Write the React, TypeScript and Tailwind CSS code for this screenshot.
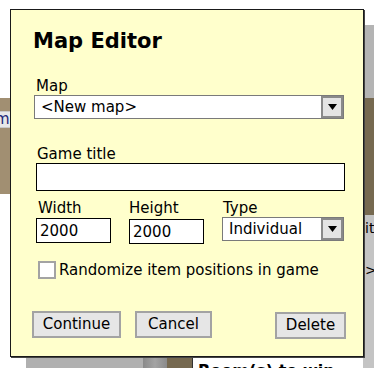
import { ChangeEvent } from 'react';

const font = { fontFamily: '"DejaVu Sans", Verdana, sans-serif' };

function Arrow() {
  return (
    <svg width="9" height="6" viewBox="0 0 9 6">
      <path d="M0 0h9L4.5 6z" fill="#000" />
    </svg>
  );
}

function FakeSelect({ value, className }: { value: string; className: string }) {
  return (
    <div className={`flex items-stretch bg-white border border-[#7a7a7a] ${className}`}>
      <div className="flex-1 flex items-center pl-[6px] text-[15px] leading-none text-black">{value}</div>
      <div className="w-[22px] flex items-center justify-center bg-[#e4e4e4] border-2 border-[#8a8a8a]">
        <Arrow />
      </div>
    </div>
  );
}

function Field({ value, className }: { value: string; className: string }) {
  return (
    <input
      readOnly
      value={value}
      onChange={(_e: ChangeEvent<HTMLInputElement>) => {}}
      className={`bg-white border border-black px-[3px] text-[15px] text-black outline-none ${className}`}
      style={font}
    />
  );
}

function Btn({ label, className }: { label: string; className: string }) {
  return (
    <button className={`h-[27px] bg-[#e6e6e6] border-2 border-[#a3a3a3] text-[15px] text-black leading-none ${className}`} style={font}>
      {label}
    </button>
  );
}

export default function App() {
  return (
    <div className="relative w-[374px] h-[368px] bg-white overflow-hidden" style={font}>
      {/* page behind the dialog */}
      <div className="absolute left-[363px] top-[25px] w-[11px] h-[73px] bg-[#b4b4b4]" />
      <div className="absolute left-0 top-[98px] w-[20px] h-[96px] bg-[#a18f72]" />
      <div className="absolute left-0 top-[111px] w-[20px] h-[17px] bg-[#e8e8e8] border-y border-[#c8c8c8] text-[15px] leading-[15px] text-[#1e2a78] -indent-[5px]">m</div>
      <div className="absolute left-[340px] top-[98px] w-[34px] h-[117px] bg-[#766950]" />
      <div className="absolute left-[340px] top-[215px] w-[34px] h-[153px] bg-[#c4c4c4] text-[14px] text-black">
        <div className="pl-[25px] pt-[5px] leading-[16px]">iti</div>
        <div className="pl-[25px] pt-[26px] leading-[16px]">&gt;</div>
      </div>
      <div className="absolute left-0 top-[340px] w-[374px] h-[28px] flex">
        <div className="w-[26px] bg-white" />
        <div className="w-[117px] bg-[#b0b0b0]" />
        <div className="w-[24px] bg-gradient-to-r from-[#8a8a8a] via-[#a4a4a4] to-[#8a8a8a]" />
        <div className="w-[25px] bg-[#766950]" />
        <div className="w-[1px] bg-[#333]" />
        <div className="flex-1 bg-white pt-[23px] pl-[5px] text-[16px] font-bold leading-none text-black">Room(s) to win</div>
        <div className="w-[11px] bg-[#c4c4c4]" />
      </div>

      {/* dialog */}
      <div className="absolute left-[10px] top-[9px] w-[354px] h-[348px] bg-[#ffffcc] border border-[#1a1a1a] shadow-[1px_1px_0_#444] flex flex-col pt-[17px]">
        <div className="ml-[22px] text-[21px] leading-[28px] font-bold text-black">Map Editor</div>

        <div className="ml-[25px] mt-[22px] text-[15px] leading-[18px] text-black">Map</div>
        <FakeSelect value="<New map>" className="ml-[23px] w-[310px] h-[24px]" />

        <div className="ml-[26px] mt-[26px] text-[15px] leading-[18px] text-black">Game title</div>
        <Field value="" className="ml-[25px] w-[309px] h-[28px]" />

        <div className="mt-[8px] ml-[25px] flex gap-0">
          <div className="flex flex-col w-[93px]">
            <div className="ml-[2px] text-[15px] leading-[18px] text-black">Width</div>
            <Field value="2000" className="mt-[1px] w-[75px] h-[25px]" />
          </div>
          <div className="flex flex-col w-[93px]">
            <div className="text-[15px] leading-[18px] text-black">Height</div>
            <Field value="2000" className="mt-[2px] w-[75px] h-[25px]" />
          </div>
          <div className="flex flex-col">
            <div className="ml-[1px] text-[15px] leading-[18px] text-black">Type</div>
            <FakeSelect value="Individual" className="w-[122px] h-[24px]" />
          </div>
        </div>

        <div className="ml-[27px] mt-[17px] flex items-center">
          <div className="w-[18px] h-[18px] bg-white border-2 border-[#a3a3a3]" />
          <span className="ml-[3px] text-[15px] leading-[18px] text-black">Randomize item positions in game</span>
        </div>

        <div className="ml-[21px] mt-[32px] flex items-start">
          <Btn label="Continue" className="w-[89px]" />
          <Btn label="Cancel" className="ml-[14px] w-[77px]" />
          <Btn label="Delete" className="ml-[63px] mt-[1px] w-[71px]" />
        </div>
      </div>
    </div>
  );
}
